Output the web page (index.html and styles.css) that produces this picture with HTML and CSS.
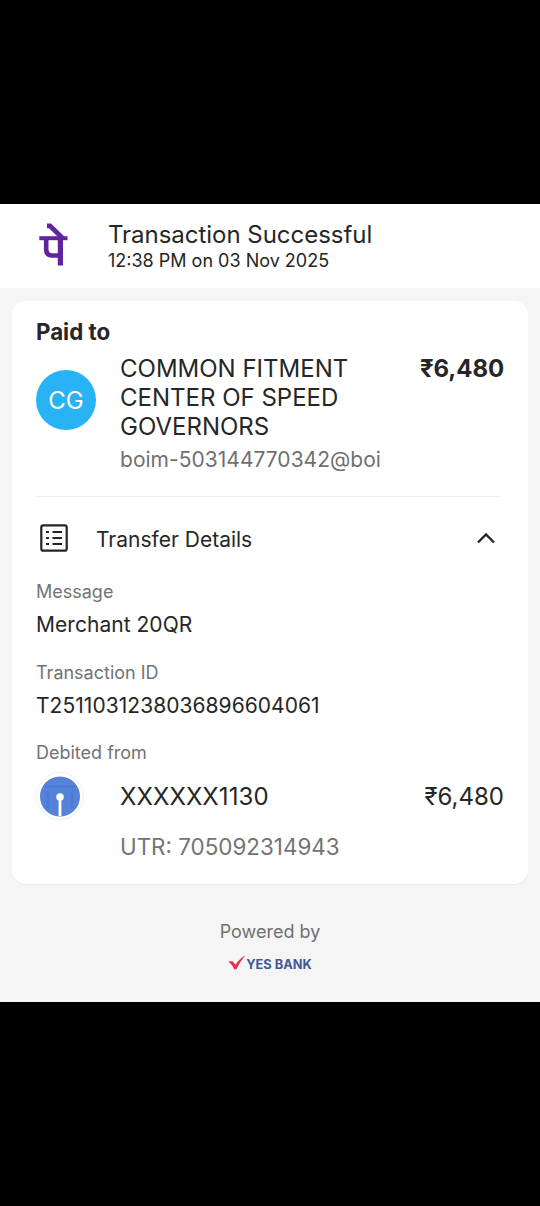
FILE: index.html
```html
<!DOCTYPE html>
<html lang="en">
<head>
<meta charset="utf-8">
<title>Transaction Successful</title>
<link rel="stylesheet" href="styles.css">
</head>
<body>
<main class="receipt">
  <header class="header">
    <svg class="logo" width="30" height="44" viewBox="0 0 30 44" fill="none" stroke="#5f259f" aria-label="PhonePe">
      <path d="M.3 15.200H28.500" stroke-width="4"/>
      <path d="M7.200 15v11q0 6.500 6 6.500h7" stroke-width="4.600"/>
      <path d="M21.400 15v27.500" stroke-width="5.200"/>
      <path d="M8 2.800h3L23.500 15" stroke-width="4.800"/>
    </svg>
    <div class="heading">
      <h1 class="title">Transaction Successful</h1>
      <p class="time">12:38 PM on 03 Nov 2025</p>
    </div>
  </header>
  <section class="card">
    <h2 class="paid">Paid to</h2>
    <div class="payee">
      <div class="avatar">CG</div>
      <div class="info">
        <p class="name">COMMON FITMENT<br>CENTER OF SPEED<br>GOVERNORS</p>
        <p class="vpa">boim-503144770342@boi</p>
      </div>
      <strong class="total">₹6,480</strong>
    </div>
    <hr class="rule">
    <div class="details">
      <svg width="28" height="28" viewBox="0 0 28 28" fill="none" stroke="#242424" stroke-width="2.200">
        <rect x="1.300" y="1.300" width="25.400" height="25.400" rx="2"/>
        <path d="M6 8h3M6 14h3M6 20h3M12.500 8h9.500M12.500 14h9.500M12.500 20h9.500"/>
      </svg>
      <h3 class="details-title">Transfer Details</h3>
      <svg class="chevron" width="20" height="14" viewBox="0 0 20 14" fill="none" stroke="#242424" stroke-width="2.300"><path d="M2 11.500L10 3.500l8 8"/></svg>
    </div>
    <dl class="fields">
      <dt class="label">Message</dt>
      <dd class="value">Merchant 20QR</dd>
      <dt class="label">Transaction ID</dt>
      <dd class="value">T2511031238036896604061</dd>
      <dt class="label">Debited from</dt>
    </dl>
    <div class="account">
      <svg width="48" height="48" viewBox="0 0 48 48">
        <circle cx="24" cy="24" r="23.500" fill="#fff" stroke="#eeeef1"/>
        <circle cx="24" cy="24.500" r="20" fill="#5583da"/>
        <path d="M9 14.500h30" stroke="#416fc4" stroke-opacity=".6" stroke-width="1.500"/>
        <path d="M12 19v18M36 19v18" stroke="#4777d1" stroke-opacity=".6" stroke-width="3"/>
        <path d="M24 24v20" stroke="#fff" stroke-width="2.800"/>
        <circle cx="24" cy="25" r="3.800" fill="#fff"/>
      </svg>
      <span class="number">XXXXXX1130</span>
      <span class="debit">₹6,480</span>
    </div>
    <p class="utr">UTR: 705092314943</p>
  </section>
  <footer class="footer">
    <p class="powered">Powered by</p>
    <div class="bank">
      <svg width="18" height="16" viewBox="0 0 18 16"><path d="M0 6.500l4.500-.3 3 3.600Q11 4 17.500.3 12 6.500 8.500 14L6.300 14.500Q4 9 0 6.500z" fill="#e5304d"/></svg>
      <span class="bank-name">YES BANK</span>
    </div>
  </footer>
</main>
</body>
</html>
```
FILE: styles.css
```css
* { box-sizing: border-box; margin: 0; padding: 0; }
body { background: #000; font-family: Inter, "Noto Sans", sans-serif; color: #262626; }
.receipt { margin: 204px 0; height: 798px; background: #f5f5f5; }
.header { height: 84px; background: #fff; display: flex; padding: 19px 0 0 39px; }
.logo { flex: none; }
.heading { margin-left: 39px; white-space: nowrap; }
.title { font-size: 24px; font-weight: 400; line-height: 24px; padding-bottom: 2px; letter-spacing: -.03px; }
.time { font-size: 18px; line-height: 24px; }
.card { margin: 13px 12px 0; height: 583px; padding: 16px 24px 0; background: #fff; border-radius: 14px; box-shadow: 0 1px 1px rgba(0, 0, 0, .05); }
.paid { font-size: 22.3px; font-weight: 700; line-height: 29px; padding-bottom: 2px; }
.payee { display: flex; margin-top: 6px; }
.avatar { width: 60px; height: 60px; margin-top: 16px; border-radius: 50%; background: #29b3f5; color: #fff; font-size: 24px; line-height: 61px; text-align: center; }
.info { margin-left: 24px; white-space: nowrap; }
.name { font-size: 24px; line-height: 29px; }
.vpa { margin-top: 5px; font-size: 21px; line-height: 28px; letter-spacing: .02px; color: #707070; }
.total { margin-left: auto; font-size: 24px; line-height: 29px; letter-spacing: -.1px; }
.rule { border: 0; height: 1px; margin: 22px 4px 0 0; background: #eee; }
.details { height: 28px; margin: 27px 8px 0 4px; display: flex; align-items: center; }
.details-title { margin-left: 28px; padding-top: 3px; font-size: 21px; font-weight: 400; line-height: 30px; }
.chevron { margin-left: auto; }
.fields { padding-top: 6px; }
.label, .value { white-space: nowrap; }
.label { margin-top: 22px; font-size: 18px; line-height: 24px; color: #737373; }
.value { margin-top: 7px; font-size: 21px; line-height: 28px; letter-spacing: .04px; }
.value + .label { margin-top: 21.5px; }
.account { display: flex; height: 48px; margin-top: 7px; align-items: center; }
.number { margin-left: 36px; font-size: 24px; letter-spacing: .1px; }
.debit { margin-left: auto; font-size: 24px; }
.utr { margin: 13px 0 0 84px; font-size: 22.4px; line-height: 28px; color: #737373; }
.footer { padding-top: 36px; text-align: center; }
.powered { font-size: 18px; line-height: 24px; color: #707070; }
.bank { display: flex; justify-content: center; margin-top: 11px; }
.bank-name { font-size: 12.8px; font-weight: 700; line-height: 19px; color: #3f5898; }
```
